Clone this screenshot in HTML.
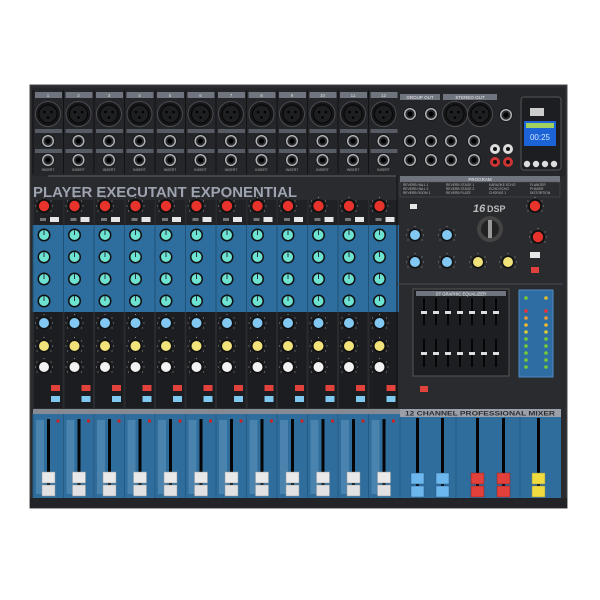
<!DOCTYPE html>
<html><head><meta charset="utf-8"><style>
html,body{margin:0;padding:0;background:#fff;width:600px;height:600px;overflow:hidden}
svg{display:block;font-family:"Liberation Sans",sans-serif}
</style></head><body>
<svg width="600" height="600" viewBox="0 0 600 600" xmlns="http://www.w3.org/2000/svg">
<defs>
<g id="xlr"><circle r="12.5" fill="#161618" stroke="#4a4c50" stroke-width="1"/><circle r="9" fill="#1e1f21" stroke="#050505"/><circle cx="-3.5" cy="-2" r="1.3" fill="#000"/><circle cx="3.5" cy="-2" r="1.3" fill="#000"/><circle cx="0" cy="3.5" r="1.3" fill="#000"/></g>
<g id="jack"><circle r="7" fill="#1a1a1c"/><circle r="6" fill="#b4b6ba"/><circle r="4.6" fill="#2a2b2e"/><circle r="2.6" fill="#000"/></g>
<g id="kdots" fill="#888"><circle cx="-7" cy="5" r=".6"/><circle cx="-8.5" cy="0" r=".6"/><circle cx="-7" cy="-5" r=".6"/><circle cx="0" cy="-8.5" r=".6"/><circle cx="7" cy="-5" r=".6"/><circle cx="8.5" cy="0" r=".6"/><circle cx="7" cy="5" r=".6"/></g>
<g id="kred"><use href="#kdots"/><circle r="7" fill="#111"/><circle r="5.2" fill="#e8322c"/></g>
<g id="kteal"><circle r="6.5" fill="#111"/><circle r="5" fill="#6ee3d2"/><line x1="0" y1="0" x2="0" y2="-5" stroke="#234" stroke-width="1"/></g>
<g id="kblue"><use href="#kdots"/><circle r="6.5" fill="#111"/><circle r="5" fill="#82c8f2"/></g>
<g id="kyel"><use href="#kdots"/><circle r="6.5" fill="#111"/><circle r="5" fill="#f2e27a"/></g>
<g id="kwht"><use href="#kdots"/><circle r="6.5" fill="#111"/><circle r="5" fill="#f2f2f2"/></g>
<g id="ch">
 <line x1="0" y1="90" x2="0" y2="174" stroke="#121315" stroke-width="1"/>
 <rect x="2" y="92" width="27" height="6" fill="#6f747e"/>
 <use href="#xlr" x="15" y="114"/>
 <rect x="2" y="129" width="27" height="4" fill="#575b63"/>
 <use href="#jack" x="15" y="141"/>
 <rect x="2" y="149" width="27" height="4" fill="#575b63"/>
 <use href="#jack" x="15" y="160"/>
 <text x="15" y="171" font-size="3.5" fill="#aaa" text-anchor="middle">INSERT</text>
 <rect x="1" y="200" width="29" height="25" fill="#202124"/>
 <use href="#kred" x="11" y="206"/>
 <rect x="17" y="217" width="9" height="5" fill="#e6e6e6"/>
 <rect x="7" y="218" width="6" height="3" fill="#777"/>
 <line x1="0" y1="225" x2="0" y2="312" stroke="#1f5276" stroke-width="1"/>
 <use href="#kteal" x="11" y="235"/>
 <use href="#kteal" x="11" y="257"/>
 <use href="#kteal" x="11" y="279"/>
 <use href="#kteal" x="11" y="301"/>
 <rect x="1" y="312" width="28.5" height="96" fill="#1c1d20"/>
 <use href="#kblue" x="11" y="323"/>
 <use href="#kyel" x="11" y="346"/>
 <use href="#kwht" x="11" y="367"/>
 <rect x="18" y="385" width="9" height="6" fill="#e2423c"/>
 <rect x="18" y="396" width="9" height="6" fill="#7fc8f0"/>
 <line x1="0" y1="413" x2="0" y2="498" stroke="#255a82" stroke-width="1"/>
 <rect x="3" y="420" width="8" height="74" fill="#4a83ae"/>
 <rect x="14" y="419" width="3" height="76" fill="#050505"/>
 <circle cx="25" cy="421" r="1.6" fill="#d02020"/>
 <rect x="9" y="472" width="13" height="11" fill="#e9e9ea" stroke="#999" stroke-width=".5"/>
 <rect x="9" y="485" width="13" height="11" fill="#e1e1e3" stroke="#999" stroke-width=".5"/>
</g>
</defs>
<rect x="30" y="85" width="537" height="423" fill="#2a2b2f" stroke="#444" />
<rect x="32" y="88" width="533" height="88" fill="#25262a"/>
<rect x="33" y="225" width="366" height="87" fill="#2d6e9f"/>
<rect x="33" y="413" width="528" height="86" fill="#2f6d9c"/>
<use href="#ch" x="33"/><use href="#ch" x="63.5"/><use href="#ch" x="94"/><use href="#ch" x="124.5"/><use href="#ch" x="155"/><use href="#ch" x="185.5"/><use href="#ch" x="216"/><use href="#ch" x="246.5"/><use href="#ch" x="277"/><use href="#ch" x="307.5"/><use href="#ch" x="338"/><use href="#ch" x="368.5"/>
<g font-size="4.5" fill="#ddd" text-anchor="middle">
<text x="48" y="97">1</text><text x="78.5" y="97">2</text><text x="109" y="97">3</text><text x="139.5" y="97">4</text><text x="170" y="97">5</text><text x="200.5" y="97">6</text><text x="231" y="97">7</text><text x="261.5" y="97">8</text><text x="292" y="97">9</text><text x="322.5" y="97">10</text><text x="353" y="97">11</text><text x="383.5" y="97">12</text>
</g>
<line x1="48" y1="176" x2="396" y2="176" stroke="#777" stroke-width=".8"/>
<text x="33" y="197" font-size="15" font-weight="bold" fill="#9ea3b0" textLength="264" lengthAdjust="spacingAndGlyphs">PLAYER EXECUTANT EXPONENTIAL</text>
<rect x="33" y="409" width="528" height="5" fill="#858a93"/>
<rect x="400" y="94" width="40" height="6" fill="#6f747e"/><text x="420" y="99" font-size="4.5" fill="#eee" text-anchor="middle">GROUP OUT</text>
<rect x="443" y="94" width="54" height="6" fill="#6f747e"/><text x="470" y="99" font-size="4.5" fill="#eee" text-anchor="middle">STEREO OUT</text>
<use href="#jack" x="410" y="114"/><use href="#jack" x="431" y="114"/>
<use href="#jack" x="410" y="141"/><use href="#jack" x="431" y="141"/>
<use href="#jack" x="410" y="160"/><use href="#jack" x="431" y="160"/>
<use href="#xlr" x="455" y="114"/><use href="#xlr" x="480" y="114"/>
<use href="#jack" x="451" y="141"/><use href="#jack" x="474" y="141"/>
<use href="#jack" x="451" y="160"/><use href="#jack" x="474" y="160"/>
<use href="#jack" x="506" y="115"/>
<circle cx="495" cy="149" r="5" fill="#ddd"/><circle cx="495" cy="149" r="2" fill="#111"/>
<circle cx="508" cy="149" r="5" fill="#ddd"/><circle cx="508" cy="149" r="2" fill="#111"/>
<circle cx="495" cy="162" r="5" fill="#c33"/><circle cx="495" cy="162" r="2" fill="#111"/>
<circle cx="508" cy="162" r="5" fill="#c33"/><circle cx="508" cy="162" r="2" fill="#111"/>
<rect x="521" y="97" width="40" height="73" rx="3" fill="#1d1e21" stroke="#555"/>
<rect x="530" y="108" width="14" height="8" fill="#ccc"/>
<rect x="524" y="121" width="32" height="25" fill="#1c63d8"/><rect x="526" y="123" width="28" height="5" fill="#9fd060"/>
<text x="540" y="140" font-size="8" fill="#cfe6ff" text-anchor="middle">00:25</text>
<circle cx="527" cy="164" r="3.2" fill="#ddd"/><circle cx="536" cy="164" r="3.2" fill="#ddd"/><circle cx="545" cy="164" r="3.2" fill="#ddd"/><circle cx="554" cy="164" r="3.2" fill="#ddd"/>
<rect x="400" y="176" width="160" height="6" fill="#6f747e"/><text x="480" y="181" font-size="4.5" fill="#eee" text-anchor="middle">PROGRAM</text>
<rect x="400" y="182" width="160" height="15" fill="#2b2c30" stroke="#555" stroke-width=".5"/>
<g font-size="3.3" fill="#bbb">
<text x="403" y="186">REVERB HALL 1</text><text x="403" y="190">REVERB HALL 2</text><text x="403" y="194">REVERB ROOM 1</text>
<text x="446" y="186">REVERB STAGE 1</text><text x="446" y="190">REVERB STAGE 2</text><text x="446" y="194">REVERB PLATE</text>
<text x="489" y="186">KARAOKE ECHO</text><text x="489" y="190">ECHO ECHO</text><text x="489" y="194">CHORUS 1</text>
<text x="530" y="186">FLANGER</text><text x="530" y="190">PHASER</text><text x="530" y="194">DISTORTION</text>
</g>
<rect x="410" y="204" width="7" height="5" fill="#e6e6e6"/>
<text x="473" y="212" font-size="11" font-weight="bold" fill="#bbb" font-style="italic">16</text><text x="487" y="212" font-size="9" font-weight="bold" fill="#bbb">DSP</text>
<circle cx="490" cy="229" r="13" fill="#444"/><circle cx="490" cy="229" r="9" fill="#222"/><rect x="488" y="220" width="4" height="18" fill="#999"/>
<use href="#kred" x="535" y="206"/><use href="#kred" x="538" y="237"/>
<use href="#kblue" x="415" y="235"/><use href="#kblue" x="447" y="235"/>
<use href="#kblue" x="415" y="262"/><use href="#kblue" x="447" y="262"/>
<use href="#kyel" x="478" y="262"/><use href="#kyel" x="508" y="262"/>
<rect x="530" y="252" width="10" height="6" fill="#e6e6e6"/><rect x="531" y="267" width="8" height="6" fill="#e2423c"/>
<line x1="397" y1="284" x2="563" y2="284" stroke="#4a4b50"/>
<rect x="413" y="289" width="96" height="87" fill="#1d1e21" stroke="#555"/>
<rect x="416" y="291" width="90" height="5" fill="#6f747e"/><text x="461" y="295.5" font-size="4.2" fill="#eee" text-anchor="middle">ST GRAPHIC EQUALIZER</text>
<g fill="#050505">
<rect x="423" y="298" width="2" height="27"/><rect x="435" y="298" width="2" height="27"/><rect x="447" y="298" width="2" height="27"/><rect x="459" y="298" width="2" height="27"/><rect x="471" y="298" width="2" height="27"/><rect x="483" y="298" width="2" height="27"/><rect x="495" y="298" width="2" height="27"/>
<rect x="423" y="339" width="2" height="28"/><rect x="435" y="339" width="2" height="28"/><rect x="447" y="339" width="2" height="28"/><rect x="459" y="339" width="2" height="28"/><rect x="471" y="339" width="2" height="28"/><rect x="483" y="339" width="2" height="28"/><rect x="495" y="339" width="2" height="28"/>
</g>
<g fill="#ddd">
<rect x="421" y="311" width="6" height="3"/><rect x="433" y="311" width="6" height="3"/><rect x="445" y="311" width="6" height="3"/><rect x="457" y="311" width="6" height="3"/><rect x="469" y="311" width="6" height="3"/><rect x="481" y="311" width="6" height="3"/><rect x="493" y="311" width="6" height="3"/>
<rect x="421" y="352" width="6" height="3"/><rect x="433" y="352" width="6" height="3"/><rect x="445" y="352" width="6" height="3"/><rect x="457" y="352" width="6" height="3"/><rect x="469" y="352" width="6" height="3"/><rect x="481" y="352" width="6" height="3"/><rect x="493" y="352" width="6" height="3"/>
</g>
<rect x="519" y="290" width="34" height="87" fill="#2e6da3" stroke="#4d8cc2"/>
<g>
<circle cx="526" cy="298" r="1.8" fill="#7c3"/><circle cx="546" cy="298" r="1.8" fill="#db3"/>
<circle cx="526" cy="311" r="1.8" fill="#e33"/><circle cx="546" cy="311" r="1.8" fill="#e33"/>
<circle cx="526" cy="318" r="1.8" fill="#e93"/><circle cx="546" cy="318" r="1.8" fill="#e93"/>
<circle cx="526" cy="325" r="1.8" fill="#eb3"/><circle cx="546" cy="325" r="1.8" fill="#eb3"/>
<circle cx="526" cy="332" r="1.8" fill="#dc3"/><circle cx="546" cy="332" r="1.8" fill="#dc3"/>
<circle cx="526" cy="339" r="1.8" fill="#7c3"/><circle cx="546" cy="339" r="1.8" fill="#7c3"/>
<circle cx="526" cy="346" r="1.8" fill="#7c3"/><circle cx="546" cy="346" r="1.8" fill="#7c3"/>
<circle cx="526" cy="353" r="1.8" fill="#7c3"/><circle cx="546" cy="353" r="1.8" fill="#7c3"/>
<circle cx="526" cy="360" r="1.8" fill="#7c3"/><circle cx="546" cy="360" r="1.8" fill="#7c3"/>
<circle cx="526" cy="367" r="1.8" fill="#7c3"/><circle cx="546" cy="367" r="1.8" fill="#7c3"/>
</g>
<rect x="420" y="386" width="8" height="6" fill="#e2423c"/>
<line x1="397" y1="175" x2="397" y2="408" stroke="#111"/>
<rect x="400" y="409" width="161" height="8" fill="#9aa0a8"/>
<text x="480" y="415.5" font-size="6.5" font-weight="bold" fill="#2a2c30" text-anchor="middle" textLength="150" lengthAdjust="spacingAndGlyphs">12 CHANNEL PROFESSIONAL MIXER</text>
<line x1="400" y1="417" x2="400" y2="498" stroke="#255a82"/><line x1="456" y1="417" x2="456" y2="498" stroke="#255a82"/><line x1="520" y1="417" x2="520" y2="498" stroke="#255a82"/>
<g fill="#050505"><rect x="416" y="418" width="3" height="77"/><rect x="441" y="418" width="3" height="77"/><rect x="476" y="418" width="3" height="77"/><rect x="502" y="418" width="3" height="77"/><rect x="537" y="418" width="3" height="77"/></g>
<g fill="#6cb8ee" stroke="#2a5a88" stroke-width=".5"><rect x="411" y="473" width="13" height="11"/><rect x="411" y="486" width="13" height="11"/><rect x="436" y="473" width="13" height="11"/><rect x="436" y="486" width="13" height="11"/></g>
<g fill="#e2403a" stroke="#822" stroke-width=".5"><rect x="471" y="473" width="13" height="11"/><rect x="471" y="486" width="13" height="11"/><rect x="497" y="473" width="13" height="11"/><rect x="497" y="486" width="13" height="11"/></g>
<g fill="#f0dc40" stroke="#885" stroke-width=".5"><rect x="532" y="473" width="13" height="11"/><rect x="532" y="486" width="13" height="11"/></g>
<rect x="30" y="498" width="537" height="10" fill="#232428"/>
</svg>
</body></html>
